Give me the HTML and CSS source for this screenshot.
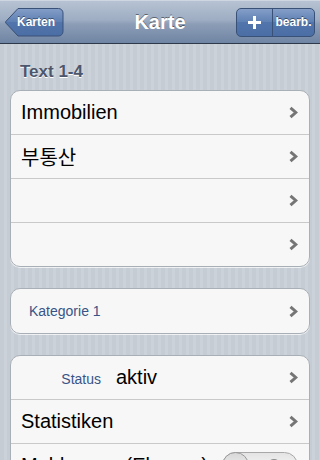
FILE: index.html
```html
<!DOCTYPE html>
<html lang="de">
<head>
<meta charset="utf-8">
<title>Karte</title>
<link rel="stylesheet" href="styles.css">
</head>
<body>
<div class="screen">
  <header class="nav">
    <div class="nav-left">
      <a class="back">
        <svg class="back-shape" width="59" height="29" viewBox="0 0 59 29">
          <defs>
            <linearGradient id="bg" x1="0" y1="0" x2="0" y2="1">
              <stop offset="0" stop-color="#849ec8"/>
              <stop offset="0.5" stop-color="#5d7fb2"/>
              <stop offset="0.5" stop-color="#5276ac"/>
              <stop offset="1" stop-color="#4a6ea5"/>
            </linearGradient>
          </defs>
          <path d="M13 0.5 H53.5 A4.5 4.5 0 0 1 58 5 V23.5 A4.5 4.5 0 0 1 53.5 28 H13 L1 15.2 A1.2 1.2 0 0 1 1 13.3 Z" fill="url(#bg)" stroke="#3a5177" stroke-width="1"/>
        </svg>
        <span class="back-label">Karten</span>
      </a>
    </div>
    <h1 class="title">Karte</h1>
    <div class="nav-right">
      <div class="seg">
        <span class="seg-item seg-plus">
          <svg width="13" height="13" viewBox="0 0 13 13"><path d="M5 0h3v5h5v3H8v5H5V8H0V5h5z" fill="#fff"/></svg>
        </span>
        <span class="seg-item seg-edit">bearb.</span>
      </div>
    </div>
  </header>

  <main class="content">
    <div class="section-header">Text 1-4</div>
    <div class="group">
      <div class="row"><span class="row-text">Immobilien</span><svg class="chev" width="9" height="13" viewBox="0 0 9 13"><path d="M1.5 1.8 L6.8 6.5 L1.5 11.2" fill="none" stroke="#757575" stroke-width="3"/></svg></div>
      <div class="row"><span class="row-text">부통산</span><svg class="chev" width="9" height="13" viewBox="0 0 9 13"><path d="M1.5 1.8 L6.8 6.5 L1.5 11.2" fill="none" stroke="#757575" stroke-width="3"/></svg></div>
      <div class="row"><span class="row-text"></span><svg class="chev" width="9" height="13" viewBox="0 0 9 13"><path d="M1.5 1.8 L6.8 6.5 L1.5 11.2" fill="none" stroke="#757575" stroke-width="3"/></svg></div>
      <div class="row"><span class="row-text"></span><svg class="chev" width="9" height="13" viewBox="0 0 9 13"><path d="M1.5 1.8 L6.8 6.5 L1.5 11.2" fill="none" stroke="#757575" stroke-width="3"/></svg></div>
    </div>

    <div class="group group-single">
      <div class="row row-tall"><span class="row-label-blue">Kategorie 1</span><svg class="chev" width="9" height="13" viewBox="0 0 9 13"><path d="M1.5 1.8 L6.8 6.5 L1.5 11.2" fill="none" stroke="#757575" stroke-width="3"/></svg></div>
    </div>

    <div class="group group-last">
      <div class="row"><span class="field-label">Status</span><span class="row-text field-value">aktiv</span><svg class="chev" width="9" height="13" viewBox="0 0 9 13"><path d="M1.5 1.8 L6.8 6.5 L1.5 11.2" fill="none" stroke="#757575" stroke-width="3"/></svg></div>
      <div class="row"><span class="row-text">Statistiken</span><svg class="chev" width="9" height="13" viewBox="0 0 9 13"><path d="M1.5 1.8 L6.8 6.5 L1.5 11.2" fill="none" stroke="#757575" stroke-width="3"/></svg></div>
      <div class="row"><span class="row-text">Meldungen (Ebenen)</span>
        <div class="switch">
          <span class="switch-o"></span>
          <span class="switch-knob"></span>
        </div>
      </div>
    </div>
  </main>
</div>
</body>
</html>
```

FILE: styles.css
```css
* { box-sizing: border-box; }

html, body {
  margin: 0;
  padding: 0;
  height: 460px;
  overflow: hidden;
}

body {
  font-family: "Liberation Sans", Arial, "Noto Sans CJK KR", sans-serif;
  background-color: #c6cdd5;
  background-image: repeating-linear-gradient(90deg, #c5ccd4 0, #c5ccd4 4px, #cbd2d9 4px, #cbd2d9 7px);
}

.screen {
  width: 320px;
  height: 460px;
  overflow: hidden;
}

/* Navigation bar */
.nav {
  height: 44px;
  display: grid;
  grid-template-columns: 1fr auto 1fr;
  align-items: center;
  padding: 0 5px 0 5px;
  background: linear-gradient(#b7c3d3 0%, #9eadc3 45%, #8c9db6 55%, #6f85a4 100%);
  border-bottom: 1px solid #2e3a4c;
  border-top: 1px solid #ced6e1;
}

.nav-left { display: flex; justify-content: flex-start; }
.nav-right { display: flex; justify-content: flex-end; }

.back {
  position: relative;
  display: flex;
  align-items: center;
  width: 59px;
  height: 29px;
}

.back-shape {
  position: absolute;
  left: 0;
  top: 0;
}

.back-label {
  position: relative;
  padding-left: 12px;
  font-weight: bold;
  font-size: 12px;
  color: #fff;
  text-shadow: 0 -1px 0 rgba(0, 0, 0, 0.45);
}

.title {
  margin: 0;
  font-size: 20px;
  font-weight: bold;
  color: #fff;
  text-shadow: 0 -1px 0 rgba(0, 0, 0, 0.45);
  line-height: 24px;
}

.seg {
  display: flex;
  height: 29px;
  width: 79px;
  border: 1px solid #3a5177;
  border-radius: 5px;
  overflow: hidden;
  background: linear-gradient(#849ec8 0%, #5d7fb2 50%, #5276ac 50%, #4a6ea5 100%);
}

.seg-item {
  display: flex;
  align-items: center;
  justify-content: center;
}

.seg-plus {
  width: 36px;
  border-right: 1px solid #3a5177;
}

.seg-edit {
  flex: 1;
  font-size: 12px;
  font-weight: bold;
  color: #fff;
  text-shadow: 0 -1px 0 rgba(0, 0, 0, 0.45);
}

/* Content */
.content {
  padding: 17px 10px 0 10px;
}

.section-header {
  padding-left: 10px;
  font-size: 17px;
  line-height: 21px;
  font-weight: bold;
  color: #4c566c;
  text-shadow: 0 1px 0 #fff;
  margin-bottom: 8px;
}

.group {
  background: #f7f7f7;
  border: 1px solid #a9afb6;
  border-radius: 10px;
  box-shadow: 0 1px 0 rgba(255, 255, 255, 0.7);
  margin-bottom: 21px;
}

.row {
  height: 44px;
  display: flex;
  align-items: center;
  padding: 0 11px 0 10px;
  border-top: 1px solid #c9c9c9;
}

.row:first-child {
  height: 43px;
  border-top: none;
}

.row-tall:first-child { height: 44px; }

.row-text {
  flex: 1;
  font-size: 20px;
  color: #000;
  white-space: nowrap;
}

.row-label-blue {
  flex: 1;
  padding-left: 8px;
  font-size: 14px;
  color: #385487;
}

.field-label {
  width: 80px;
  text-align: right;
  font-size: 14px;
  color: #385487;
  margin-right: 15px;
  padding-top: 3px;
}

.field-value { flex: 1; }

.chev { flex: none; }

/* Switch (off) */
.switch {
  position: relative;
  flex: none;
  width: 76px;
  height: 27px;
  border-radius: 14px;
  border: 1px solid #a8a8a8;
  background: linear-gradient(#e4e4e4, #fefefe);
}

.switch-o {
  position: absolute;
  right: 16px;
  top: 6px;
  width: 14px;
  height: 14px;
  border-radius: 50%;
  border: 3px solid #8c8c8c;
}

.switch-knob {
  position: absolute;
  left: -1px;
  top: -1px;
  width: 27px;
  height: 27px;
  border-radius: 50%;
  border: 1px solid #9a9a9a;
  background: linear-gradient(#d8d8d8, #fbfbfb);
}
```
